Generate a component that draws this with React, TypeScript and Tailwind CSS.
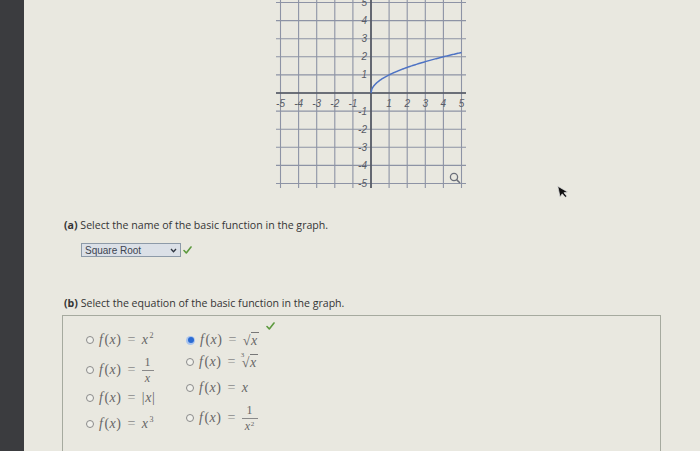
import React from "react";

const U = 18.1;
const OX = 101;
const OY = 93;
const ticks = [-5, -4, -3, -2, -1, 0, 1, 2, 3, 4, 5];

function Graph() {
  const pts: string[] = [];
  for (let i = 0; i <= 100; i++) {
    const x = (i / 100) * 5;
    pts.push(`${(OX + x * U).toFixed(2)},${(OY - Math.sqrt(x) * U).toFixed(2)}`);
  }
  return (
    <svg width="200" height="195" viewBox="0 0 200 195" className="block">
      {/* grid */}
      {ticks.map((k) => (
        <g key={k}>
          <line x1={OX + k * U} y1={-4} x2={OX + k * U} y2={188} stroke="#8d93a5" strokeWidth={1.1} />
          <line x1={6} y1={OY - k * U} x2={196} y2={OY - k * U} stroke="#8d93a5" strokeWidth={1.1} />
        </g>
      ))}
      <line x1={OX} y1={-4} x2={OX} y2={188} stroke="#50545f" strokeWidth={1.6} />
      <line x1={6} y1={OY} x2={196} y2={OY} stroke="#50545f" strokeWidth={1.6} />
      {/* labels */}
      <g fontFamily="Liberation Sans, sans-serif" fontSize="10" fontStyle="italic" fill="#595c66">
        {ticks
          .filter((k) => k !== 0)
          .map((k) => (
            <text key={`x${k}`} x={OX + k * U} y={OY + 14} textAnchor="middle">
              {k}
            </text>
          ))}
        {ticks
          .filter((k) => k !== 0)
          .map((k) => (
            <text key={`y${k}`} x={OX - 4} y={OY - k * U + 3.5} textAnchor="end">
              {k}
            </text>
          ))}
      </g>
      <polyline points={pts.join(" ")} fill="none" stroke="#4e73c4" strokeWidth={1.5} />
      {/* magnifier */}
      <circle cx={184} cy={177} r={3.6} fill="none" stroke="#6b6f7a" strokeWidth={1.3} />
      <line x1={186.6} y1={179.6} x2={190} y2={183} stroke="#6b6f7a" strokeWidth={1.5} />
    </svg>
  );
}

function Check({ className = "" }: { className?: string }) {
  return (
    <svg width="9" height="8" viewBox="0 0 9 8" className={className}>
      <polyline points="1,4.5 3.3,7 8,1" fill="none" stroke="#5d9a3e" strokeWidth="1.6" strokeLinecap="round" strokeLinejoin="round" />
    </svg>
  );
}

function Radio({ checked = false }: { checked?: boolean }) {
  if (checked) {
    return (
      <span className="mr-[5px] flex h-[9px] w-[9px] shrink-0 items-center justify-center rounded-full bg-[#a9c4ee]">
        <span className="h-[6px] w-[6px] rounded-full bg-[#2b6bd3]" />
      </span>
    );
  }
  return <span className="mr-[5px] h-[8px] w-[8px] shrink-0 rounded-full border border-[#8a8a8a] bg-[#f1f1ec]" />;
}

function X() {
  return <i>x</i>;
}

function Fx() {
  return (
    <>
      <i className="mr-[1px]">f</i>(<X />)<span className="mx-[6px] text-[#8a8a8a]">=</span>
    </>
  );
}

function Frac({ den }: { den: React.ReactNode }) {
  return (
    <span className="inline-flex flex-col items-center text-[12px] leading-[15px]">
      <span>1</span>
      <span className="border-t border-[#8a8a8a] px-[3px]">{den}</span>
    </span>
  );
}

function Eq({ children, checked = false, className = "" }: { children: React.ReactNode; checked?: boolean; className?: string }) {
  return (
    <div className={`flex items-center ${className}`}>
      <Radio checked={checked} />
      <span className="flex items-center font-['Liberation_Serif',serif] text-[14px] leading-none tracking-[0.5px] text-[#666]">
        <Fx />
        {children}
      </span>
    </div>
  );
}

function Root({ index }: { index?: string }) {
  return (
    <span className="relative inline-flex items-end">
      {index && <span className="absolute left-[-1px] top-[-2px] text-[7px] not-italic">{index}</span>}
      <span className="not-italic">√</span>
      <span className="border-t border-[#777] pr-[1px] leading-[15px]">
        <X />
      </span>
    </span>
  );
}

export default function App() {
  return (
    <div className="relative flex h-[451px] w-[700px] overflow-hidden bg-[#e9e8e0] font-['Open_Sans',sans-serif]">
      <div className="w-[24px] shrink-0 bg-[#3b3c3f]" />
      <div className="flex flex-1 flex-col pl-[40px]">
        <div className="ml-[206px]">
          <Graph />
        </div>

        <p className="mt-[23px] text-[10.6px] leading-[14px] text-[#353535]">
          <span className="font-bold">(a)</span> Select the name of the basic function in the graph.
        </p>

        <div className="ml-[17px] mt-[11px] flex items-center">
          <div className="flex h-[14px] w-[100px] items-center justify-between border border-[#8d9aa8] bg-[#dbe0e7] pl-[3px] pr-[3px] font-['Liberation_Sans',sans-serif] text-[10px] text-[#3d4450]">
            <span>Square Root</span>
            <svg width="7" height="5" viewBox="0 0 7 5">
              <polyline points="1,1 3.5,3.8 6,1" fill="none" stroke="#2f3540" strokeWidth="1.3" />
            </svg>
          </div>
          <Check className="ml-[2px]" />
        </div>

        <p className="mt-[39px] text-[10.6px] leading-[14px] text-[#353535]">
          <span className="font-bold">(b)</span> Select the equation of the basic function in the graph.
        </p>

        <div className="relative -ml-[2px] mt-[5px] h-[180px] w-[599px] shrink-0 border border-[#a6aa9f] pl-[23px] pt-[14px]">
          <Check className="absolute left-[203px] top-[6px]" />
          <div className="flex">
            <div className="flex w-[100px] flex-col">
              <Eq className="h-[20px]">
                <X />
                <sup className="ml-[1px] text-[8px]">2</sup>
              </Eq>
              <Eq className="h-[40px]">
                <Frac den={<X />} />
              </Eq>
              <Eq className="h-[16px]">
                |<X />|
              </Eq>
              <Eq className="h-[36px]">
                <X />
                <sup className="ml-[1px] text-[8px]">3</sup>
              </Eq>
            </div>
            <div className="flex flex-col">
              <Eq checked className="h-[20px]">
                <Root />
              </Eq>
              <Eq className="h-[24px]">
                <Root index="3" />
              </Eq>
              <Eq className="h-[28px]">
                <X />
              </Eq>
              <Eq className="h-[32px]">
                <Frac
                  den={
                    <>
                      <X />
                      <sup className="text-[7px]">2</sup>
                    </>
                  }
                />
              </Eq>
            </div>
          </div>
        </div>
      </div>

      {/* mouse pointer */}
      <svg width="12" height="15" viewBox="0 0 12 15" className="absolute left-[558px] top-[184px] -rotate-12">
        <path d="M1 1 L1 12 L3.8 9.4 L6 13.5 L7.8 12.7 L5.7 8.7 L9.4 8.7 Z" fill="#111" stroke="#ddd" strokeWidth="0.7" />
      </svg>
    </div>
  );
}
